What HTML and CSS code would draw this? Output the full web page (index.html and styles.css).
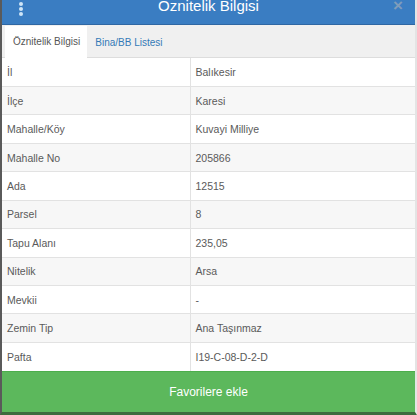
FILE: index.html
```html
<!DOCTYPE html>
<html lang="tr">
<head>
  <meta charset="UTF-8" />
  <meta name="viewport" content="width=device-width, initial-scale=1.0"/>
  <title>Öznitelik Bilgisi</title>
  <link rel="stylesheet" href="styles.css">
</head>
<body>
  <div class="panel">
    <div class="panel-header">
      <span class="menu-dots"><i></i><i></i><i></i></span>
      <h1>Öznitelik Bilgisi</h1>
      <span class="close">&times;</span>
    </div>

    <div class="tabs">
      <a href="#" class="tab active">Öznitelik Bilgisi</a>
      <a href="#" class="tab">Bina/BB Listesi</a>
    </div>

    <table class="attr-table">
      <tr><td>İl</td><td>Balıkesir</td></tr>
      <tr><td>İlçe</td><td>Karesi</td></tr>
      <tr><td>Mahalle/Köy</td><td>Kuvayi Milliye</td></tr>
      <tr><td>Mahalle No</td><td>205866</td></tr>
      <tr><td>Ada</td><td>12515</td></tr>
      <tr><td>Parsel</td><td>8</td></tr>
      <tr><td>Tapu Alanı</td><td>235,05</td></tr>
      <tr><td>Nitelik</td><td>Arsa</td></tr>
      <tr><td>Mevkii</td><td>-</td></tr>
      <tr><td>Zemin Tip</td><td>Ana Taşınmaz</td></tr>
      <tr><td>Pafta</td><td>I19-C-08-D-2-D</td></tr>
    </table>

    <button class="fav-button">Favorilere ekle</button>
  </div>
</body>
</html>
```

FILE: styles.css
```css
* {
  margin: 0;
  padding: 0;
  box-sizing: border-box;
}

body {
  background-color: #ffffff;
  font-family: 'Liberation Sans', Arial, sans-serif;
  color: #555;
}

.panel {
  width: 417px;
  height: 415px;
  border-left: 2px solid #5a5a5a;
  border-right: 2px solid #e4e4e4;
  border-bottom: 3px solid #3d6b3d;
  display: flex;
  flex-direction: column;
  overflow: hidden;
}

.panel-header {
  height: 25px;
  background-color: #3a7dc2;
  border-bottom: 1px solid #2f67a3;
  display: flex;
  align-items: flex-start;
  justify-content: space-between;
  padding: 0 17px 0 17px;
  overflow: hidden;
  flex-shrink: 0;
}
.panel-header h1 {
  color: #ffffff;
  font-size: 15px;
  font-weight: normal;
  line-height: 15px;
  margin-top: -2px;
}
.menu-dots {
  display: flex;
  flex-direction: column;
  gap: 1px;
  padding-top: 2px;
  width: 5px;
}
.menu-dots i {
  display: block;
  width: 4px;
  height: 4px;
  border-radius: 50%;
  background-color: #cfe6f7;
}
.close {
  color: #7f9cba;
  font-size: 17px;
  line-height: 12px;
  font-weight: bold;
  width: 5px;
  text-align: right;
}

.tabs {
  height: 33px;
  background-color: #f0f0f0;
  border-bottom: 1px solid #dddddd;
  display: flex;
  align-items: flex-end;
  padding-left: 3px;
  flex-shrink: 0;
}
.tab {
  display: block;
  height: 31px;
  line-height: 31px;
  padding: 0 7px 0 8px;
  font-size: 10px;
  color: #337ab7;
  text-decoration: none;
  margin-bottom: -1px;
}
.tab.active {
  background-color: #ffffff;
  color: #555;
  height: 32px;
}

.attr-table {
  width: 100%;
  border-collapse: collapse;
  font-size: 10.5px;
  color: #5a5a5a;
  flex-shrink: 0;
}
.attr-table td {
  height: 28.45px;
  padding: 0 5px;
  border-top: 1px solid #e2e2e2;
  vertical-align: middle;
}
.attr-table tr:first-child td {
  border-top: none;
}
.attr-table td:first-child {
  width: 188px;
  border-right: 1px solid #e2e2e2;
}
.attr-table tr:nth-child(even) td {
  background-color: #f7f7f7;
}

.fav-button {
  flex: 1;
  width: 100%;
  border: none;
  border-top: 1px solid #4cae4c;
  background-color: #5cb85c;
  color: #ffffff;
  font-family: 'Liberation Sans', Arial, sans-serif;
  font-size: 12px;
  cursor: pointer;
}
```
